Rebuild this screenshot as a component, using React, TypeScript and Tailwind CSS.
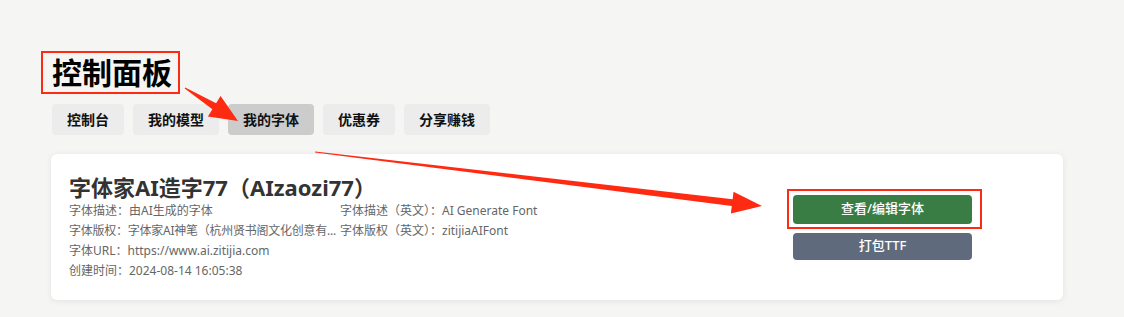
import React from "react";

const font = { fontFamily: '"Noto Sans", "Noto Sans CJK SC", sans-serif' };

export default function App() {
  const tabs = ["控制台", "我的模型", "我的字体", "优惠券", "分享赚钱"];
  return (
    <div
      className="relative w-[1124px] h-[317px] overflow-hidden bg-[#f5f5f3] text-[#333]"
      style={font}
    >
      <div className="pl-[41px] pt-[51px]">
        <div className="inline-block border-2 border-[#ff2a12] pl-[9px] pr-[6px]">
          <h1 className="text-[30px] leading-[39px] font-bold text-black">控制面板</h1>
        </div>
      </div>
      <div className="flex gap-[9px] pl-[52px] mt-[10px]">
        {tabs.map((t) => (
          <div
            key={t}
            className={
              "h-[31px] px-[15px] flex items-center rounded-[4px] text-[14px] font-bold text-[#111] " +
              (t === "我的字体" ? "bg-[#cccccc]" : "bg-[#ececec]")
            }
          >
            {t}
          </div>
        ))}
      </div>
      <div className="mx-[51px] mt-[19px] w-[1012px] bg-white rounded-[6px] shadow-[0_1px_6px_rgba(0,0,0,0.08)] flex items-center pl-[18px] pt-[19px] pb-[19px]">
        <div className="flex-1">
          <div className="text-[22px] leading-[28px] font-bold text-[#333]">字体家AI造字77（AIzaozi77）</div>
          <div className="grid grid-cols-[271px_auto] text-[12px] leading-[20px] text-[#666]">
            <div className="whitespace-nowrap">字体描述：由AI生成的字体</div>
            <div className="whitespace-nowrap">字体描述（英文）：AI Generate Font</div>
            <div className="whitespace-nowrap tracking-[-0.25px]">字体版权：字体家AI神笔（杭州贤书阁文化创意有...</div>
            <div className="whitespace-nowrap">字体版权（英文）：zitijiaAIFont</div>
            <div className="whitespace-nowrap">字体URL：https://www.ai.zitijia.com</div>
            <div></div>
            <div className="whitespace-nowrap">创建时间：2024-08-14 16:05:38</div>
          </div>
        </div>
        <div className="w-[179px] mr-[91px] flex flex-col gap-[9px]">
          <div className="relative">
            <div className="absolute left-[-6px] right-[-10px] top-[-6px] bottom-[-5px] border-2 border-[#ff2a12]" />
            <div className="h-[29px] rounded-[4px] bg-[#3a7d44] text-white text-[13px] font-medium flex items-center justify-center">
              查看/编辑字体
            </div>
          </div>
          <div className="h-[27px] rounded-[4px] bg-[#5f6a7d] text-white text-[13px] font-medium flex items-center justify-center">
            打包TTF
          </div>
        </div>
      </div>
      <svg className="absolute inset-0 pointer-events-none" width="1124" height="317">
        <polygon
          fill="#ff2a12"
          points="184.74,88.42 212.38,109.16 207.88,116.38 238,121 220.58,96.0 216.08,103.22 185.26,87.58"
        />
        <polygon
          fill="#ff2a12"
          points="314.94,152.5 731.78,206.07 730.87,213.52 762,206 733.53,191.68 732.62,199.13 315.06,151.5"
        />
      </svg>
    </div>
  );
}
